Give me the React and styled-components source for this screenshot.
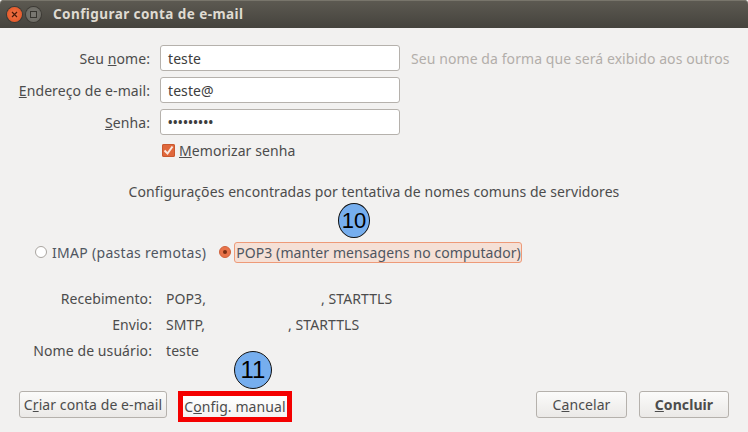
import React from 'react'
import styled, { createGlobalStyle } from 'styled-components'

const GlobalStyle = createGlobalStyle`
	html, body {
		margin: 0;
		padding: 0;
		background: #ffffff;
	}
`

const Window = styled.div`
	position: relative;
	width: 748px;
	height: 432px;
	overflow: hidden;
	display: flex;
	flex-direction: column;
	background: #f2f1f0;
	color: #4c4c4c;
	font-family: 'Noto Sans', 'Open Sans', sans-serif;
	font-size: 14px;
	letter-spacing: 0.08px;
`

const TitleBar = styled.div`
	height: 28px;
	flex: none;
	display: flex;
	align-items: center;
	padding-left: 7px;
	border-radius: 4px 4px 0 0;
	background: linear-gradient(#5d5a52, #45433d);
	box-shadow: inset 0 1px 0 #78756b;
`

const WindowButton = styled.div`
	width: 15px;
	height: 15px;
	margin-right: 4px;
	border-radius: 50%;
	display: flex;
	align-items: center;
	justify-content: center;
	background: ${props => (props.close ? 'radial-gradient(#f0764a, #e2501f)' : 'radial-gradient(#7b7a74, #68665f)')};
	box-shadow: 0 0 0 1px #3c3a35;
`

const Title = styled.span`
	margin-left: 8px;
	font-size: 13.5px;
	font-weight: 700;
	letter-spacing: 0.43px;
	color: #dfdbd2;
`

const Form = styled.div`
	display: flex;
	flex-direction: column;
	gap: 6px;
	padding-top: 17px;
`

const Row = styled.div`
	display: flex;
	align-items: center;
	height: 26px;
`

const Label = styled.label`
	width: 150px;
	flex: none;
	text-align: right;
`

const Input = styled.div`
	box-sizing: border-box;
	width: 240px;
	height: 26px;
	margin-left: 10px;
	padding-left: 7px;
	display: flex;
	align-items: center;
	background: #ffffff;
	border: 1px solid #b5b1ac;
	border-radius: 3px;
	color: #3d3d3d;
`

const Dots = styled.span`
	font-size: 12px;
	letter-spacing: 0.55px;
	font-weight: 700;
`

const Hint = styled.span`
	margin-left: 11px;
	color: #b2aeaa;
	white-space: nowrap;
`

const CheckRow = styled.div`
	display: flex;
	align-items: center;
	height: 18px;
	margin-top: 6px;
	padding-left: 162px;
	gap: 4px;
`

const CheckBox = styled.span`
	width: 13px;
	height: 13px;
	display: flex;
	border-radius: 2px;
	background: #e0683c;
	box-shadow: inset 0 0 0 1px #c9582f;
`

const Message = styled.div`
	margin-top: 23px;
	text-align: center;
	height: 20px;
	line-height: 20px;
`

const Protocols = styled.div`
	display: flex;
	align-items: center;
	height: 22px;
	margin-top: 39px;
	padding-left: 35px;
`

const Radio = styled.span`
	box-sizing: border-box;
	width: 12px;
	height: 12px;
	flex: none;
	display: flex;
	align-items: center;
	justify-content: center;
	border-radius: 50%;
	background: ${props => (props.checked ? '#e8734a' : '#ffffff')};
	border: 1px solid ${props => (props.checked ? '#d0623c' : '#a9a5a0')};
`

const RadioDot = styled.span`
	width: 4px;
	height: 4px;
	border-radius: 50%;
	background: #7a2f14;
`

const RadioLabel = styled.span`
	margin-left: 5px;
	margin-right: 13px;
	letter-spacing: 0.3px;
	white-space: nowrap;
	color: #4f5661;
`

const SelectedLabel = styled.span`
	box-sizing: border-box;
	width: 288px;
	height: 21px;
	margin-left: 3px;
	padding-left: 1px;
	display: flex;
	align-items: center;
	white-space: nowrap;
	color: #4f5661;
	background: #f5e0d6;
	border: 1px solid #ee9a78;
	border-radius: 3px;
`

const Details = styled.div`
	display: grid;
	grid-template-columns: 152px auto;
	column-gap: 14px;
	grid-auto-rows: 26px;
	align-items: center;
	margin-top: 22px;
`

const DetailName = styled.span`
	text-align: right;
`

const DetailValue = styled.span`
	display: flex;
	white-space: nowrap;
`

const Hidden = styled.span`
	display: inline-block;
	width: ${props => props.width}px;
`

const Footer = styled.div`
	display: flex;
	align-items: center;
	margin-top: auto;
	padding: 0 19px 14px;
`

const Button = styled.div`
	box-sizing: border-box;
	height: 27px;
	width: ${props => props.width}px;
	margin-left: ${props => props.gap || 0}px;
	display: flex;
	align-items: center;
	justify-content: center;
	white-space: nowrap;
	font-weight: ${props => (props.primary ? 700 : 400)};
	border: 1px solid #b5b1ac;
	border-radius: 3px;
	background: linear-gradient(#fbfbfa, #ebe9e7);
	color: #4c4c4c;
	${props => props.marked && `
		position: relative;
		border: none;
		border-radius: 0;
		background: linear-gradient(#ffffff, #f4f3f2);
		outline: 5px solid #f40000;
		height: 21px;
		top: 1.5px;
	`}
`

const Spacer = styled.div`
	flex: 1;
`

const Badge = styled.div`
	position: absolute;
	left: ${props => props.x}px;
	top: ${props => props.y}px;
	width: ${props => props.w}px;
	height: ${props => props.h}px;
	box-sizing: border-box;
	display: flex;
	align-items: center;
	justify-content: center;
	border: 1px solid #111111;
	border-radius: 50%;
	background: #76aeee;
	color: #000000;
	font-family: 'Liberation Sans', Arial, sans-serif;
	font-size: ${props => props.size}px;
	letter-spacing: 0;
`

const CloseIcon = () => (
	<svg width="7" height="7" viewBox="0 0 7 7">
		<path d="M1 1l5 5M6 1l-5 5" stroke="#4a1a08" strokeWidth="1.2" fill="none" />
	</svg>
)

const MaximizeIcon = () => (
	<svg width="7" height="7" viewBox="0 0 7 7">
		<rect x="0.5" y="0.5" width="6" height="6" stroke="#36352f" fill="none" />
	</svg>
)

const CheckIcon = () => (
	<svg width="13" height="13" viewBox="0 0 13 13">
		<path d="M2.5 6.5l3 3 5-7" stroke="#fbe9e0" strokeWidth="2" fill="none" />
	</svg>
)

const App = () => (
	<Window>
		<GlobalStyle />
		<TitleBar>
			<WindowButton close>
				<CloseIcon />
			</WindowButton>
			<WindowButton>
				<MaximizeIcon />
			</WindowButton>
			<Title>Configurar conta de e-mail</Title>
		</TitleBar>

		<Form>
			<Row>
				<Label>Seu <u>n</u>ome:</Label>
				<Input>teste</Input>
				<Hint>Seu nome da forma que será exibido aos outros</Hint>
			</Row>
			<Row>
				<Label><u>E</u>ndereço de e-mail:</Label>
				<Input>teste@</Input>
			</Row>
			<Row>
				<Label><u>S</u>enha:</Label>
				<Input><Dots>•••••••••</Dots></Input>
			</Row>
		</Form>

		<CheckRow>
			<CheckBox><CheckIcon /></CheckBox>
			<span><u>M</u>emorizar senha</span>
		</CheckRow>

		<Message>Configurações encontradas por tentativa de nomes comuns de servidores</Message>

		<Protocols>
			<Radio />
			<RadioLabel>IMAP (pastas remotas)</RadioLabel>
			<Radio checked><RadioDot /></Radio>
			<SelectedLabel>POP3 (manter mensagens no computador)</SelectedLabel>
		</Protocols>

		<Details>
			<DetailName>Recebimento:</DetailName>
			<DetailValue>POP3,<Hidden width={115} />, STARTTLS</DetailValue>
			<DetailName>Envio:</DetailName>
			<DetailValue>SMTP,<Hidden width={83} />, STARTTLS</DetailValue>
			<DetailName>Nome de usuário:</DetailName>
			<DetailValue>teste</DetailValue>
		</Details>

		<Footer>
			<Button width={148}>C<u>r</u>iar conta de e-mail</Button>
			<Button width={104} gap={16} marked>C<u>o</u>nfig. manual</Button>
			<Spacer />
			<Button width={91}>C<u>a</u>ncelar</Button>
			<Button width={90} gap={12} primary><u>C</u>oncluir</Button>
		</Footer>

		<Badge x={338} y={203} w={32} h={35} size={22}>10</Badge>
		<Badge x={234} y={351} w={38} h={38} size={24}>11</Badge>
	</Window>
)

export default App
